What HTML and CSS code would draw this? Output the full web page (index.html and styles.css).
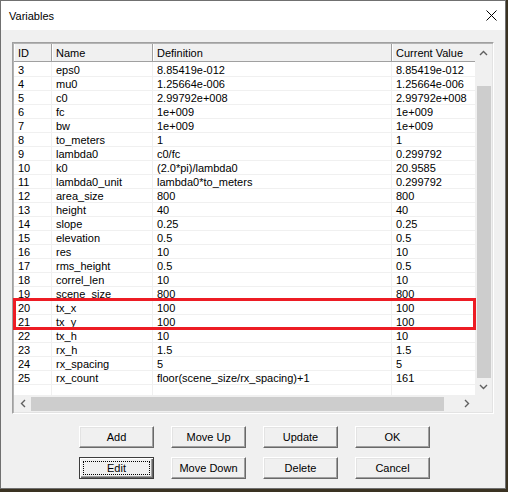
FILE: index.html
```html
<!DOCTYPE html>
<html>
<head>
<meta charset="utf-8">
<title>Variables</title>
<link rel="stylesheet" href="styles.css">
</head>
<body>
<div class="window">
  <div class="titlebar">
    <span class="title">Variables</span>
    <svg class="close" width="11" height="11" viewBox="0 0 11 11"><path d="M0.5 0.5 L10.5 10.5 M10.5 0.5 L0.5 10.5" stroke="#000" stroke-width="1" fill="none"/></svg>
  </div>
  <div class="content">
    <div class="frame">
      <div class="viewport">
        <div class="row header">
          <div class="hcell">ID</div><div class="hcell">Name</div><div class="hcell">Definition</div><div class="hcell">Current Value</div>
        </div>
        <div class="row"><div class="cell">3</div><div class="cell">eps0</div><div class="cell">8.85419e-012</div><div class="cell">8.85419e-012</div></div>
        <div class="row"><div class="cell">4</div><div class="cell">mu0</div><div class="cell">1.25664e-006</div><div class="cell">1.25664e-006</div></div>
        <div class="row"><div class="cell">5</div><div class="cell">c0</div><div class="cell">2.99792e+008</div><div class="cell">2.99792e+008</div></div>
        <div class="row"><div class="cell">6</div><div class="cell">fc</div><div class="cell">1e+009</div><div class="cell">1e+009</div></div>
        <div class="row"><div class="cell">7</div><div class="cell">bw</div><div class="cell">1e+009</div><div class="cell">1e+009</div></div>
        <div class="row"><div class="cell">8</div><div class="cell">to_meters</div><div class="cell">1</div><div class="cell">1</div></div>
        <div class="row"><div class="cell">9</div><div class="cell">lambda0</div><div class="cell">c0/fc</div><div class="cell">0.299792</div></div>
        <div class="row"><div class="cell">10</div><div class="cell">k0</div><div class="cell">(2.0*pi)/lambda0</div><div class="cell">20.9585</div></div>
        <div class="row"><div class="cell">11</div><div class="cell">lambda0_unit</div><div class="cell">lambda0*to_meters</div><div class="cell">0.299792</div></div>
        <div class="row"><div class="cell">12</div><div class="cell">area_size</div><div class="cell">800</div><div class="cell">800</div></div>
        <div class="row"><div class="cell">13</div><div class="cell">height</div><div class="cell">40</div><div class="cell">40</div></div>
        <div class="row"><div class="cell">14</div><div class="cell">slope</div><div class="cell">0.25</div><div class="cell">0.25</div></div>
        <div class="row"><div class="cell">15</div><div class="cell">elevation</div><div class="cell">0.5</div><div class="cell">0.5</div></div>
        <div class="row"><div class="cell">16</div><div class="cell">res</div><div class="cell">10</div><div class="cell">10</div></div>
        <div class="row"><div class="cell">17</div><div class="cell">rms_height</div><div class="cell">0.5</div><div class="cell">0.5</div></div>
        <div class="row"><div class="cell">18</div><div class="cell">correl_len</div><div class="cell">10</div><div class="cell">10</div></div>
        <div class="row"><div class="cell">19</div><div class="cell">scene_size</div><div class="cell">800</div><div class="cell">800</div></div>
        <div class="row"><div class="cell">20</div><div class="cell">tx_x</div><div class="cell">100</div><div class="cell">100</div></div>
        <div class="row"><div class="cell">21</div><div class="cell">tx_y</div><div class="cell">100</div><div class="cell">100</div></div>
        <div class="row"><div class="cell">22</div><div class="cell">tx_h</div><div class="cell">10</div><div class="cell">10</div></div>
        <div class="row"><div class="cell">23</div><div class="cell">rx_h</div><div class="cell">1.5</div><div class="cell">1.5</div></div>
        <div class="row"><div class="cell">24</div><div class="cell">rx_spacing</div><div class="cell">5</div><div class="cell">5</div></div>
        <div class="row"><div class="cell">25</div><div class="cell">rx_count</div><div class="cell">floor(scene_size/rx_spacing)+1</div><div class="cell">161</div></div>
        <div class="row"><div class="cell"></div><div class="cell"></div><div class="cell"></div><div class="cell"></div></div>
      </div>
      <div class="vscroll">
        <div class="arrow"><svg width="9" height="6" viewBox="0 0 9 6"><path d="M1 5 L4.5 1.5 L8 5" stroke="#606060" stroke-width="1.4" fill="none"/></svg></div>
        <div class="vtrack"><div class="vthumb"></div></div>
        <div class="arrow"><svg width="9" height="6" viewBox="0 0 9 6"><path d="M1 1 L4.5 4.5 L8 1" stroke="#606060" stroke-width="1.4" fill="none"/></svg></div>
      </div>
      <div class="hscroll">
        <div class="harrow"><svg width="6" height="9" viewBox="0 0 6 9"><path d="M5 1 L1.5 4.5 L5 8" stroke="#606060" stroke-width="1.4" fill="none"/></svg></div>
        <div class="hthumb"></div>
        <div class="htrack"></div>
        <div class="harrow"><svg width="6" height="9" viewBox="0 0 6 9"><path d="M1 1 L4.5 4.5 L1 8" stroke="#606060" stroke-width="1.4" fill="none"/></svg></div>
      </div>
      <div class="corner"></div>
      <div class="highlight"></div>
    </div>
    <div class="buttons">
      <button class="btn">Add</button>
      <button class="btn">Move Up</button>
      <button class="btn">Update</button>
      <button class="btn">OK</button>
      <button class="btn default"><span class="focus"></span>Edit</button>
      <button class="btn">Move Down</button>
      <button class="btn">Delete</button>
      <button class="btn">Cancel</button>
    </div>
  </div>
</div>
</body>
</html>
```
FILE: styles.css
```css
* { box-sizing: border-box; }
html, body { margin: 0; padding: 0; }
body {
  width: 508px;
  height: 492px;
  overflow: hidden;
  background: #3a3222;
  font-family: "Liberation Sans", Arial, sans-serif;
  font-size: 11px;
  color: #000;
}
.window {
  width: 506px;
  height: 489px;
  border: 1px solid #707070;
  background: #f0f0f0;
  display: flex;
  flex-direction: column;
}
.titlebar {
  height: 29px;
  flex: none;
  background: #fff;
  display: flex;
  align-items: center;
  justify-content: space-between;
  padding: 0 8px 0 8px;
}
.title {
  font-size: 11px;
  line-height: 13px;
  padding-top: 2px;
}
.close { display: block; margin-top: 0; }
.content {
  padding: 12px 0 0 11px;
}
.frame {
  position: relative;
  width: 482px;
  height: 372px;
  border: 1px solid;
  border-color: #a0a0a0 #ffffff #ffffff #a0a0a0;
  padding: 1px;
  box-shadow: inset 1px 1px 0 #b4b4b4, inset -1px -1px 0 #e3e3e3;
  display: grid;
  grid-template-columns: 461px 17px;
  grid-template-rows: 351px 17px;
}
.viewport {
  overflow: hidden;
  background: #fff;
}
.row {
  display: grid;
  grid-template-columns: 38px 101px 239px 140px;
  height: 14px;
}
.row.header { height: 18px; }
.cell {
  border-right: 1px solid #f0f0f0;
  border-bottom: 1px solid #f0f0f0;
  padding: 2px 0 0 4px;
  line-height: 12px;
  white-space: nowrap;
}
.hcell {
  background: #f0f0f0;
  border-right: 1px solid #a0a0a0;
  border-bottom: 1px solid #a0a0a0;
  box-shadow: inset 1px 0 0 #fff;
  padding: 2px 0 0 4px;
  line-height: 14px;
  white-space: nowrap;
  overflow: hidden;
}
.vscroll {
  background: #f0f0f0;
  display: flex;
  flex-direction: column;
}
.arrow {
  height: 17px;
  flex: none;
  display: flex;
  align-items: center;
  justify-content: center;
}
.arrow svg, .harrow svg { display: block; }
.vtrack {
  flex: 1;
  padding-top: 25px;
}
.vthumb {
  height: 292px;
  margin: 0 1px 0 2px;
  background: #cdcdcd;
}
.hscroll {
  background: #f0f0f0;
  display: flex;
}
.harrow {
  width: 17px;
  flex: none;
  display: flex;
  align-items: center;
  justify-content: center;
}
.hthumb {
  width: 413px;
  flex: none;
  margin: 2px 0 1px 0;
  background: #cdcdcd;
}
.htrack { flex: 1; }
.corner { background: #f0f0f0; }
.highlight {
  position: absolute;
  left: 0;
  top: 255px;
  width: 463px;
  height: 32px;
  border: 3px solid #ed1c24;
  pointer-events: none;
}
.buttons {
  display: grid;
  grid-template-columns: repeat(4, 75px);
  grid-auto-rows: 22px;
  column-gap: 17px;
  row-gap: 9px;
  margin: 12px 0 0 67px;
}
.btn {
  position: relative;
  appearance: none;
  margin: 0;
  padding: 0;
  font-family: "Liberation Sans", Arial, sans-serif;
  font-size: 11px;
  line-height: 20px;
  color: #000;
  text-align: center;
  background: #f0f0f0;
  border: 1px solid;
  border-color: #ffffff #696969 #696969 #ffffff;
  box-shadow: inset -1px -1px 0 #a0a0a0, inset 1px 1px 0 #e3e3e3;
}
.btn.default {
  border-color: #3c3c3c;
  box-shadow: inset 1px 1px 0 #fff, inset -1px -1px 0 #696969, inset -2px -2px 0 #a0a0a0;
}
.focus {
  position: absolute;
  left: 3px;
  top: 3px;
  right: 3px;
  bottom: 3px;
  border: 1px dotted #000;
}
```
